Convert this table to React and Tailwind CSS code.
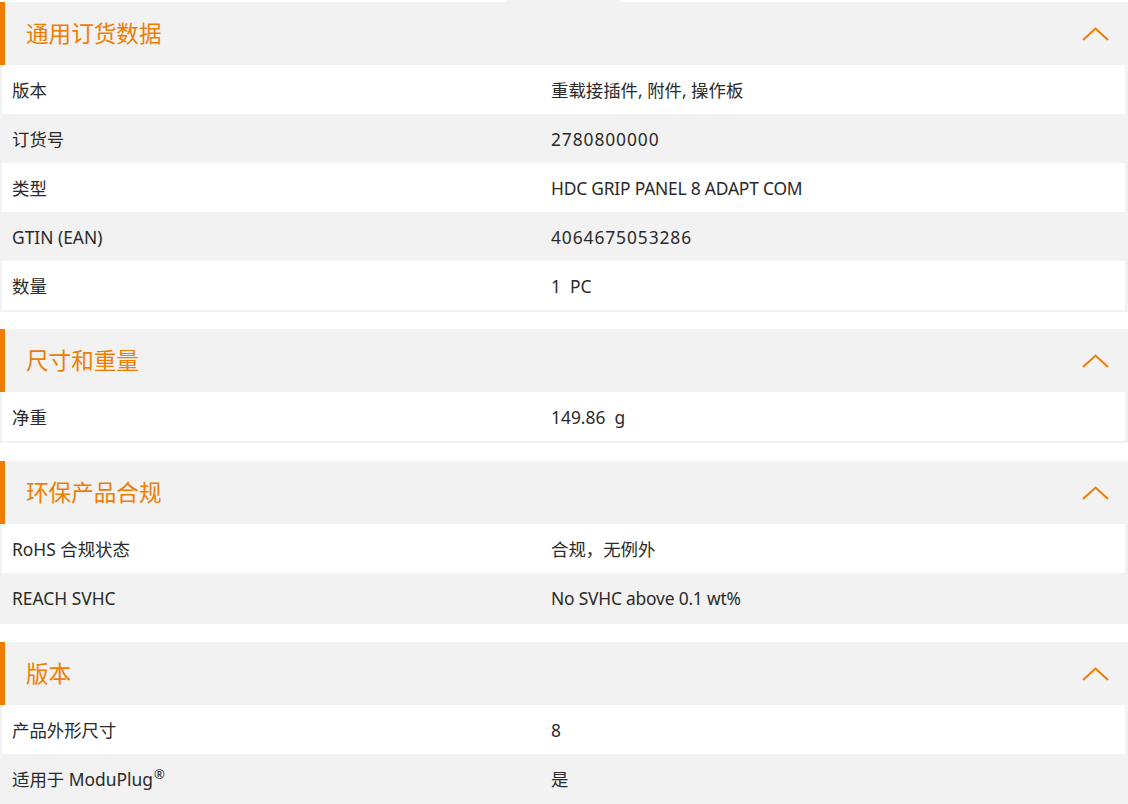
import React from "react";

const ORANGE = "#f07d00";

const sections = [
  {
    title: "通用订货数据",
    rows: [
      ["版本", "重载接插件, 附件, 操作板"],
      ["订货号", <span key="n" className="tracking-[0.9px]">2780800000</span>],
      ["类型", <span key="t" className="tracking-[-0.2px]">HDC GRIP PANEL 8 ADAPT COM</span>],
      ["GTIN (EAN)", <span key="g" className="tracking-[0.9px]">4064675053286</span>],
      ["数量", "1  PC"],
    ],
    mt: "mt-0",
  },
  {
    title: "尺寸和重量",
    rows: [["净重", "149.86  g"]],
    mt: "mt-[17px]",
  },
  {
    title: "环保产品合规",
    rows: [
      ["RoHS 合规状态", "合规，无例外"],
      ["REACH SVHC", <span key="r" className="tracking-[-0.2px]">No SVHC above 0.1 wt%</span>],
    ],
    mt: "mt-[18px]",
  },
  {
    title: "版本",
    rows: [
      ["产品外形尺寸", "8"],
      [
        <span key="m">
          适用于 ModuPlug
          <span className="text-[13px] relative -top-[7px] ml-[1px]">®</span>
        </span>,
        "是",
      ],
    ],
    mt: "mt-[18px]",
  },
];

function Chevron() {
  return (
    <svg width="27" height="14" viewBox="0 0 27 14" fill="none">
      <polyline
        points="1,13 13.5,1.5 26,13"
        stroke={ORANGE}
        strokeWidth="2"
        fill="none"
      />
    </svg>
  );
}

function Section({ title, rows, mt }) {
  return (
    <div className={mt}>
      <div className="h-[63px] bg-[#f2f2f2] border-l-[5px] border-[#f07d00] flex items-center justify-between pl-[21px] pr-[19px]">
        <span className="text-[22.6px] text-[#f07d00] leading-none pt-[2px]">{title}</span>
        <Chevron />
      </div>
      <div className="bg-[#f2f2f2] pl-[2px] pr-[3px] pb-[2px]">
        {rows.map((r, i) => (
          <div
            key={i}
            className={`h-[49px] grid grid-cols-[539px_1fr] items-center pl-[10px] pt-[2px] text-[#2a2a2a] text-[17.4px] ${
              i % 2 === 0 ? "bg-white" : "bg-[#f2f2f2]"
            }`}
          >
            <div className="whitespace-pre">{r[0]}</div>
            <div className="whitespace-pre">{r[1]}</div>
          </div>
        ))}
      </div>
    </div>
  );
}

export default function App() {
  return (
    <div
      className="w-[1128px] h-[804px] overflow-hidden bg-white"
      style={{ fontFamily: '"Noto Sans", "Noto Sans CJK SC", sans-serif' }}
    >
      <div className="h-[2px] flex">
        <div className="ml-[507px] w-[113px] bg-[#f2f2f2]" />
      </div>
      {sections.map((s, i) => (
        <Section key={i} {...s} />
      ))}
    </div>
  );
}
